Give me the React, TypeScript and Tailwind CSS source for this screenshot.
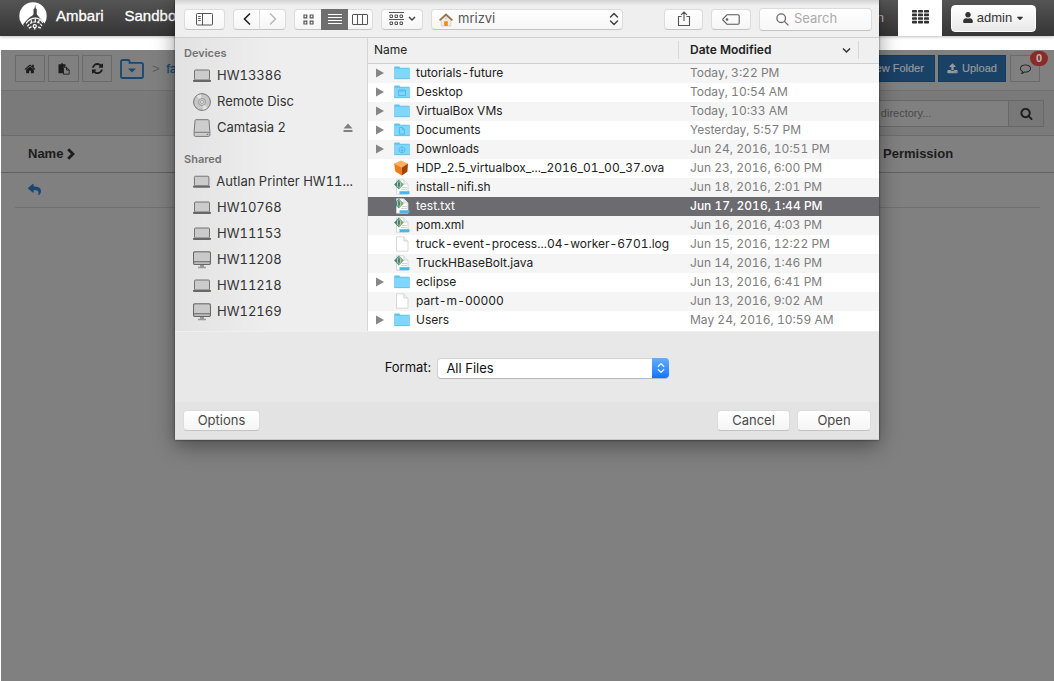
import React from "react";
import { FaCaretDown, FaReply, FaUser } from "react-icons/fa";

const HOME =
  "M1472 992v480q0 26-19 45t-45 19h-384v-384h-256v384h-384q-26 0-45-19t-19-45v-480q0-1 .5-3t.5-3l575-474 575 474q1 2 1 6zm223-69l-62 74q-8 9-21 11h-3q-13 0-21-7l-692-577-692 577q-12 8-24 7-13-2-21-11l-62-74q-8-10-7-23.5t11-21.5l719-599q32-26 76-26t76 26l244 204v-195q0-14 9-23t23-9h192q14 0 23 9t9 23v408l219 182q10 8 11 21.5t-7 23.5z";
const REFRESH =
  "M1511 928q0 5-1 7-64 268-268 434.5t-478 166.5q-146 0-282.5-55t-243.5-157l-129 129q-19 19-45 19t-45-19-19-45v-448q0-26 19-45t45-19h448q26 0 45 19t19 45-19 45l-137 137q71 66 161 102t187 36q134 0 250-65t186-179q11-17 53-117 8-23 30-23h192q13 0 22.5 9.5t9.5 22.5zm25-800v448q0 26-19 45t-45 19h-448q-26 0-45-19t-19-45 19-45l138-138q-148-137-349-137-134 0-250 65t-186 179q-11 17-53 117-8 23-30 23h-199q-13 0-22.5-9.5t-9.5-22.5v-7q65-268 270-434.5t480-166.5q146 0 284 55.5t245 156.5l130-129q19-19 45-19t45 19 19 45z";
const COMMENT =
  "M896 384q-204 0-381.5 69.5t-282 187.5-104.5 255q0 112 71.5 213.5t201.5 175.5l87 50-27 96q-24 91-70 172 152-63 275-171l43-38 57 6q69 8 130 8 204 0 381.5-69.5t282-187.5 104.5-255-104.5-255-282-187.5-381.5-69.5zm896 512q0 174-120 321.5t-326 233-450 85.5q-70 0-145-8-198 175-460 242-49 14-114 22h-5q-15 0-27-10.5t-16-27.5v-1q-3-4-.5-12t2-10 4.5-9.5l6-9 7-8.5 8-9q7-8 31-34.5t34.5-38 31-39.5 32.5-51 27-59 26-76q-157-89-247.5-220t-90.5-281q0-174 120-321.5t326-233 450-85.5 450 85.5 326 233 120 321.5z";
const SEARCH =
  "M1216 832q0-185-131.5-316.5t-316.5-131.5-316.5 131.5-131.5 316.5 131.5 316.5 316.5 131.5 316.5-131.5 131.5-316.5zm512 832q0 52-38 90t-90 38q-54 0-90-38l-343-342q-179 124-399 124-143 0-273.5-55.5t-225-150-150-225-55.5-273.5 55.5-273.5 150-225 225-150 273.5-55.5 273.5 55.5 225 150 150 225 55.5 273.5q0 220-124 399l343 343q37 37 37 90z";
const UPLOAD =
  "M1344 1472q0-26-19-45t-45-19-45 19-19 45 19 45 45 19 45-19 19-45zm256 0q0-26-19-45t-45-19-45 19-19 45 19 45 45 19 45-19 19-45zm128-224v320q0 40-28 68t-68 28h-1472q-40 0-68-28t-28-68v-320q0-40 28-68t68-28h427q21 56 70.5 92t110.5 36h256q61 0 110.5-36t70.5-92h427q40 0 68 28t28 68zm-325-648q-17 40-59 40h-256v448q0 26-19 45t-45 19h-256q-26 0-45-19t-19-45v-448h-256q-42 0-59-40-17-39 14-69l448-448q18-19 45-19t45 19l448 448q31 30 14 69z";

function Glyph({ d, className }: { d: string; className: string }) {
  return (
    <svg viewBox="0 0 1792 1792" fill="currentColor" className={className} aria-hidden="true">
      <path d={d} />
    </svg>
  );
}

function AmbariLogo() {
  return (
    <svg viewBox="0 0 27 27" className="h-7 w-7" aria-hidden="true">
      <circle cx="13.5" cy="13.5" r="13.2" fill="#fff" />
      <path d="M15.600 2.500l.5 3.500 1 1v4.800l1 1.200c2 2.400 4.800 5.500 7.400 8.800L22 27H5.500L4 21.500c2.500-3.500 6-6.800 9-8.500l1-1.200V7l1-1z" fill="#444" />
      <path d="M6.800 20.500c2.600-3.500 5.800-5 9-5 3.200 0 5.600 1.600 7.200 4.500" fill="none" stroke="#fff" strokeWidth="1.200" />
      <path d="M8.200 23.500c1.800-3 4.400-4.300 7.400-4.300 2.800 0 4.900 1.200 6.400 3.800" fill="none" stroke="#fff" strokeWidth="1.200" strokeDasharray="2.600 1" />
      <path d="M11.500 17.500l1 2.300M15.700 16v3M19.700 17.400l-1.200 2.300" stroke="#fff" strokeWidth="1.200" />
      <circle cx="15.200" cy="23.200" r="1.500" fill="none" stroke="#fff" strokeWidth="1.200" />
      <path d="M9.500 25.300l2.500-1.500M18.500 24l2.500 1.200M15.200 25v1.500" stroke="#fff" strokeWidth="1.300" />
    </svg>
  );
}

function Laptop() {
  return (
    <svg viewBox="0 0 18 18" className="h-[18px] w-[18px]" aria-hidden="true">
      <rect x="1.500" y="3" width="15" height="10" rx="1" fill="#cbcbcb" stroke="#737373" />
      <path d="M0 13h18v1q0 .9-1 .9H1q-1 0-1-.9z" fill="#686868" />
    </svg>
  );
}

function Desktop() {
  return (
    <svg viewBox="0 0 18 18" className="h-[18px] w-[18px]" aria-hidden="true">
      <rect x=".6" y=".9" width="16.800" height="12.400" rx="1" fill="#d9d9d9" stroke="#686868" strokeWidth="1.200" />
      <rect x="1.500" y="1.800" width="15" height="8.600" fill="#c9c9c9" />
      <path d="M1 10.800h16" stroke="#686868" strokeWidth="1.200" />
      <path d="M7 14h4v1.800h2v1.400H5v-1.400h2z" fill="#999" />
    </svg>
  );
}

function Disc() {
  return (
    <svg viewBox="0 0 18 18" className="h-[18px] w-[18px]" aria-hidden="true">
      <circle cx="9" cy="9" r="8.400" fill="#c6c6c6" stroke="#747474" />
      <path d="M9 9L3.500 3.200A8 8 0 0 1 8 1.200zM9 9l5.500 5.800A8 8 0 0 1 10 16.800z" fill="#e2e2e2" />
      <circle cx="9" cy="9" r="3.500" fill="#d2d2d2" stroke="#8a8a8a" strokeWidth=".8" />
      <circle cx="9" cy="9" r="1.500" fill="#eee" stroke="#8a8a8a" strokeWidth=".7" />
    </svg>
  );
}

function Drive() {
  return (
    <svg viewBox="0 0 18 18" className="h-[18px] w-[18px]" aria-hidden="true">
      <path d="M3 .7h12q.9 0 1 1l.9 11V16q0 1.400-1.400 1.400h-13Q1.100 17.400 1.100 16v-3.300l.9-11q.1-1 1-1z" fill="#cdcdcd" stroke="#787878" />
      <path d="M1.300 13.300h15.400" stroke="#787878" />
      <path d="M13.800 15.300h1.500" stroke="#666" />
    </svg>
  );
}

type FileKind = "folder" | "desktop" | "documents" | "downloads" | "box" | "code" | "blank";

function FileIcon({ kind }: { kind: FileKind }) {
  if (kind === "box") {
    return (
      <svg viewBox="0 0 16 16" className="h-4 w-4" aria-hidden="true">
        <path d="M7 .4l7 3.100-6.200 3.900L.2 3.600z" fill="#f9b25c" />
        <path d="M.2 3.600l7.600 3.800v8.200L1.300 11.600z" fill="#f07c19" />
        <path d="M14 3.500l-.6 8.200-5.600 3.900V7.400z" fill="#a5420c" />
      </svg>
    );
  }
  if (kind === "blank" || kind === "code") {
    return (
      <svg viewBox="0 0 16 16" className="h-4 w-4" aria-hidden="true">
        <path d="M2.500.8h7.300l4.200 4.200v10.200H2.500z" fill="#fff" stroke="#cfcfcf" strokeWidth=".8" />
        <path d="M9.800.8V5H14" fill="#f0f0f0" stroke="#cfcfcf" strokeWidth=".8" />
        {kind === "code" && (
          <>
            <path d="M8 8.500h5M7 10.500h6" stroke="#c5c9cc" strokeWidth=".8" />
            <path d="M5.500 12.200h10v3h-10z" fill="#4ab5e8" />
            <path d="M5 .6L.1 5.500 5 10.400z" fill="#2b88b5" />
            <path d="M5 .6l4.900 4.900L5 10.400z" fill="#63aebd" />
            <path d="M3 3.400Q5 1.400 7 3.400v4.200Q5 9.600 3 7.600z" fill="#e8c33e" />
            <path d="M4.200 3.300h1.600v4.400H4.200z" fill="#277285" />
          </>
        )}
      </svg>
    );
  }
  return (
    <svg viewBox="0 0 16 16" className="h-4 w-4" aria-hidden="true">
      <path d="M.2 2.300q0-.7.700-.7h4.300l1.300 1.200h8.500q.7 0 .7.700v9.900q0 .6-.7.600H.9q-.7 0-.7-.6z" fill="#5fc4ed" />
      <path d="M.2 3.800h15.500v9.400q0 .6-.7.600H.9q-.7 0-.7-.6z" fill="#80d6fb" />
      <path d="M.5 13.700h15" stroke="#59b9df" strokeWidth=".6" />
      {kind === "desktop" && <path d="M4.500 6h7v5.500h-7zM4.500 7h7" fill="none" stroke="#4fb3dc" strokeWidth=".8" />}
      {kind === "documents" && <path d="M5.500 5.500h3l2 2v4.700h-5zM8.500 5.500v2h2" fill="none" stroke="#4fb3dc" strokeWidth=".8" />}
      {kind === "downloads" && (
        <path d="M8 6a2.900 2.900 0 1 0 .01 0M8 7.300v2.900M6.700 9L8 10.300 9.300 9" fill="none" stroke="#4fb3dc" strokeWidth=".9" />
      )}
    </svg>
  );
}

const files: { name: string; date: string; kind: FileKind; selected?: boolean }[] = [
  { name: "tutorials-future", date: "Today, 3:22 PM", kind: "folder" },
  { name: "Desktop", date: "Today, 10:54 AM", kind: "desktop" },
  { name: "VirtualBox VMs", date: "Today, 10:33 AM", kind: "folder" },
  { name: "Documents", date: "Yesterday, 5:57 PM", kind: "documents" },
  { name: "Downloads", date: "Jun 24, 2016, 10:51 PM", kind: "downloads" },
  { name: "HDP_2.5_virtualbox_..._2016_01_00_37.ova", date: "Jun 23, 2016, 6:00 PM", kind: "box" },
  { name: "install-nifi.sh", date: "Jun 18, 2016, 2:01 PM", kind: "code" },
  { name: "test.txt", date: "Jun 17, 2016, 1:44 PM", kind: "code", selected: true },
  { name: "pom.xml", date: "Jun 16, 2016, 4:03 PM", kind: "code" },
  { name: "truck-event-process...04-worker-6701.log", date: "Jun 15, 2016, 12:22 PM", kind: "blank" },
  { name: "TruckHBaseBolt.java", date: "Jun 14, 2016, 1:46 PM", kind: "code" },
  { name: "eclipse", date: "Jun 13, 2016, 6:41 PM", kind: "folder" },
  { name: "part-m-00000", date: "Jun 13, 2016, 9:02 AM", kind: "blank" },
  { name: "Users", date: "May 24, 2016, 10:59 AM", kind: "folder" },
];

const shared = [
  { name: "Autlan Printer HW11...", icon: <Laptop /> },
  { name: "HW10768", icon: <Laptop /> },
  { name: "HW11153", icon: <Laptop /> },
  { name: "HW11208", icon: <Desktop /> },
  { name: "HW11218", icon: <Laptop /> },
  { name: "HW12169", icon: <Desktop /> },
];

const macButton =
  "flex h-[21px] items-center justify-center rounded border border-[#dcdcdc] border-b-[#c4c4c4] bg-linear-to-b from-white to-[#f5f5f5] text-[#4a4a4a]";

function Place({ icon, name, children }: { icon: React.ReactNode; name: string; children?: React.ReactNode }) {
  return (
    <li>
      <a href="#" className="flex h-[26px] items-center gap-1.5 pr-3.5 pl-[18px] text-[13px] text-[#333]">
        {icon}
        <span className="flex-1 whitespace-nowrap">{name}</span>
        {children}
      </a>
    </li>
  );
}

function UpDown({ className }: { className: string }) {
  return (
    <svg viewBox="0 0 10 14" className={className} fill="none" stroke="currentColor" strokeWidth="1.500" strokeLinecap="round" strokeLinejoin="round" aria-hidden="true">
      <path d="M1.500 5L5 1.500 8.500 5M1.500 9L5 12.500 8.500 9" />
    </svg>
  );
}

function DialogToolbar() {
  return (
    <div className="flex h-[38px] items-center border-b border-[#cfcfcf] bg-linear-to-b from-[#d2d2d2] via-[#efefef] via-15% to-[#efefef] pt-px pr-[7px] pl-[9px]">
      <button type="button" aria-label="Toggle sidebar" className={`${macButton} w-[41px]`}>
        <svg viewBox="0 0 17 13" className="h-[13px] w-[17px]" fill="none" stroke="#555" aria-hidden="true">
          <rect x=".5" y=".5" width="16" height="11.500" rx="1" />
          <path d="M6.500 .5v11.500M2.200 3.500h2.500M2.200 5.500h2.500M2.200 7.500h2.500" />
        </svg>
      </button>
      <div className="ml-2 flex">
        <button type="button" aria-label="Back" className={`${macButton} w-[27px] rounded-r-none`}>
          <svg viewBox="0 0 8 14" className="h-3.5 w-2" fill="none" stroke="#222" strokeWidth="1.600" aria-hidden="true"><path d="M7 1.500L1.500 7 7 12.500" /></svg>
        </button>
        <button type="button" aria-label="Forward" className={`${macButton} w-[26px] rounded-l-none border-l-0`}>
          <svg viewBox="0 0 8 14" className="h-3.5 w-2" fill="none" stroke="#b5b5b5" strokeWidth="1.400" aria-hidden="true"><path d="M1 1.500L6.500 7 1 12.500" /></svg>
        </button>
      </div>
      <div className="ml-2 flex">
        <button type="button" aria-label="Icon view" className={`${macButton} w-[27px] rounded-r-none border-r-0`}>
          <svg viewBox="0 0 11 11" className="h-[11px] w-[11px]" fill="none" stroke="#555" strokeWidth="1.200" aria-hidden="true">
            <path d="M1 1h2.800v2.800H1zM7.200 1H10v2.800H7.200zM1 7.200h2.800V10H1zM7.200 7.200H10V10H7.200z" />
          </svg>
        </button>
        <button type="button" aria-label="List view" className="flex h-[21px] w-[27px] items-center justify-center bg-[#6f6f6f]">
          <svg viewBox="0 0 14 12" className="h-3 w-3.5" stroke="#fff" aria-hidden="true"><path d="M0 1.500h14M0 4.500h14M0 7.500h14M0 10.500h14" /></svg>
        </button>
        <button type="button" aria-label="Column view" className={`${macButton} w-[25px] rounded-l-none border-l-0`}>
          <svg viewBox="0 0 16 11" className="h-[11px] w-4" fill="none" stroke="#555" aria-hidden="true">
            <rect x=".5" y=".5" width="15" height="10" rx=".5" />
            <path d="M5.500 .5v10M10.500 .5v10" />
          </svg>
        </button>
      </div>
      <button type="button" aria-label="Arrange" className={`${macButton} ml-2 w-[42px] gap-1`}>
        <svg viewBox="0 0 15 14" className="h-3.5 w-[15px]" fill="none" stroke="#555" aria-hidden="true">
          <path d="M0 .5h15M0 7.500h15M1 3h2.500v2.500H1zM6 3h2.500v2.500H6zM11 3h2.500v2.500H11zM1 10h2.500v2.500H1zM6 10h2.500v2.500H6zM11 10h2.500v2.500H11z" />
        </svg>
        <svg viewBox="0 0 8 6" className="h-1.5 w-2" fill="none" stroke="#444" strokeWidth="1.500" aria-hidden="true"><path d="M1 1l3 3 3-3" /></svg>
      </button>
      <div className="relative ml-2 h-[21px] w-[192px]">
        <select aria-label="Location" defaultValue="mrizvi" className="block h-[21px] w-full appearance-none rounded border border-[#dcdcdc] border-b-[#c4c4c4] bg-linear-to-b from-white to-[#f5f5f5] pb-0.5 pl-[26px] text-[13px] leading-4 text-[#555]">
          <option>mrizvi</option>
        </select>
        <svg viewBox="0 0 14 14" className="pointer-events-none absolute top-1 left-2 h-3.5 w-3.5" aria-hidden="true">
          <path d="M2.200 6.500L7 2.500l4.800 4V13H2.200z" fill="#efece5" stroke="#c7c2b7" strokeWidth=".6" />
          <path d="M.6 7.300L7 1.500l6.400 5.800" fill="none" stroke="#987348" strokeWidth="1.800" />
          <path d="M5.200 8.200h3.600V13H5.200z" fill="#ee8d12" />
          <circle cx="7" cy="5.600" r="1" fill="#c2cbd0" />
        </svg>
        <UpDown className="pointer-events-none absolute top-[3px] right-1 h-3.5 w-2.5 text-[#444]" />
      </div>
      <button type="button" aria-label="Share" className={`${macButton} ml-auto w-[39px]`}>
        <svg viewBox="0 0 14 16" className="h-4 w-3.5" fill="none" stroke="#555" strokeWidth="1.100" aria-hidden="true">
          <path d="M4.500 5.500H1.500v9h11v-9h-3M7 10V1M4 3.800L7 1l3 2.800" />
        </svg>
      </button>
      <button type="button" aria-label="Edit tags" className={`${macButton} ml-2 w-10`}>
        <svg viewBox="0 0 18 11" className="h-[11px] w-[18px]" fill="none" stroke="#555" strokeWidth="1.100" aria-hidden="true">
          <path d="M5.500.7H16q1.200 0 1.200 1.200v7.200q0 1.200-1.200 1.200H5.500q-.7 0-1.100-.6L1 6.100q-.4-.6 0-1.200l3.400-3.600q.4-.6 1.100-.6z" />
          <circle cx="5" cy="5.500" r=".8" />
        </svg>
      </button>
      <div className="relative ml-2 h-[23px] w-[113px]">
        <input type="text" aria-label="Search" placeholder="Search" className="block h-[23px] w-full rounded border border-[#dcdcdc] border-b-[#c4c4c4] bg-linear-to-b from-white to-[#f7f7f7] pb-0.5 pl-[34px] text-[13px] placeholder:text-[#aaa]" />
        <svg viewBox="0 0 13 13" className="pointer-events-none absolute top-[5px] left-[17px] h-[13px] w-[13px]" fill="none" stroke="#6a6a6a" strokeWidth="1.300" aria-hidden="true">
          <circle cx="5.200" cy="5.200" r="4.300" />
          <path d="M8.400 8.400l4 4" />
        </svg>
      </div>
    </div>
  );
}

function FileTable() {
  return (
    <table className="w-full table-fixed border-collapse text-left text-xs tabular-nums">
      <colgroup>
        <col />
        <col className="w-[181px]" />
        <col className="w-5" />
      </colgroup>
      <thead>
        <tr className="h-[25px] border-b border-[#cfcfcf] bg-[#f0f0f0] text-[#222]">
          <th scope="col" className="py-0 pl-1.5 font-normal">Name</th>
          <th scope="col" className="p-0 font-semibold">
            <div className="flex h-[18px] items-center justify-between border-x border-[#d8d8d8] pr-[7px] pl-[11px]">
              Date Modified
              <svg viewBox="0 0 9 7" className="h-[7px] w-[9px]" fill="none" stroke="#333" strokeWidth="1.500" aria-hidden="true"><path d="M1 1.500l3.500 3.500L8 1.500" /></svg>
            </div>
          </th>
          <td className="p-0" />
        </tr>
      </thead>
      <tbody>
        {files.map((f) => (
          <tr key={f.name} className={f.selected ? "h-[19px] bg-[#6c6b70] text-white" : "h-[19px] text-[#222] odd:bg-[#f5f5f5]"}>
            <td className="p-0">
              <div className="flex h-[19px] items-center pl-2">
                <span className="flex w-[18px]">
                  {["folder", "desktop", "documents", "downloads"].includes(f.kind) && (
                    <svg viewBox="0 0 8 10" className="h-2.5 w-2" aria-hidden="true"><path d="M0 .5L8 5 0 9.500z" fill="#868686" /></svg>
                  )}
                </span>
                <FileIcon kind={f.kind} />
                <span className="ml-1.5 whitespace-nowrap">{f.name}</span>
              </div>
            </td>
            <td className={f.selected ? "py-0 pl-3 font-medium whitespace-nowrap" : "py-0 pl-3 whitespace-nowrap text-[#7d7d7d]"}>{f.date}</td>
            <td className="p-0" />
          </tr>
        ))}
      </tbody>
    </table>
  );
}

function OpenDialog() {
  return (
    <div role="dialog" aria-label="Open file" className="w-[704px] bg-[#e8e8e8] font-['Inter','Liberation_Sans',sans-serif] shadow-[0_6px_20px_rgba(0,0,0,0.4),0_0_2px_rgba(0,0,0,0.6)]">
      <DialogToolbar />
      <div className="flex h-[293px]">
        <nav aria-label="Places" className="w-[193px] shrink-0 border-r border-[#d6d6d6] bg-linear-to-r from-[#e2e2e2] to-[#eeeeee] to-50% tabular-nums">
          <h2 className="flex h-[25px] items-end pb-0.5 pl-[9px] text-[11px] font-semibold text-[#737373]">Devices</h2>
          <ul>
            <Place icon={<Laptop />} name="HW13386" />
            <Place icon={<Disc />} name="Remote Disc" />
            <Place icon={<Drive />} name="Camtasia 2">
              <svg viewBox="0 0 10 10" className="h-2.5 w-2.5" fill="#808080" aria-hidden="true"><path d="M5 .5l4.500 5h-9zM.5 7h9v2h-9z" /></svg>
            </Place>
          </ul>
          <h2 className="flex h-7 items-end pb-0.5 pl-[9px] text-[11px] font-semibold text-[#737373]">Shared</h2>
          <ul>
            {shared.map((p) => (
              <Place key={p.name} icon={p.icon} name={p.name} />
            ))}
          </ul>
        </nav>
        <div className="min-w-0 flex-1 bg-white">
          <FileTable />
        </div>
      </div>
      <div className="flex h-[71px] items-center justify-center border-t border-[#efefef] pt-0.5 text-[13px] text-[#111]">
        <label htmlFor="format" className="mr-1.5">Format:</label>
        <div className="relative h-[21px] w-[232px]">
          <select id="format" defaultValue="All Files" className="block h-[21px] w-full appearance-none rounded border border-[#d0d0d0] border-b-[#b8b8b8] bg-white pl-2 text-[13px] leading-4">
            <option>All Files</option>
          </select>
          <span className="pointer-events-none absolute top-0 right-0 flex h-5 w-[17px] items-center justify-center rounded-r bg-linear-to-b from-[#63adfc] to-[#0b74fd]">
            <UpDown className="h-3 w-2 text-white" />
          </span>
        </div>
      </div>
      <div className="flex h-[38px] items-center gap-[7px] border-b border-[#c9c9c9] bg-[#e3e3e3] px-2 text-[13px]">
        <button type="button" className={`${macButton} mr-auto w-[77px]`}>Options</button>
        <button type="button" className={`${macButton} w-[73px]`}>Cancel</button>
        <button type="button" className={`${macButton} w-[74px]`}>Open</button>
      </div>
    </div>
  );
}

function TopBar() {
  return (
    <header className="flex h-9 items-stretch bg-linear-to-b from-[#555] to-[#353535] text-white shadow-[0_1px_3px_rgba(0,0,0,0.25)]">
      <a href="#" className="ml-[19px] flex items-center gap-[9px] pb-1 text-[15px] [-webkit-text-stroke:0.3px_white]">
        <AmbariLogo />
        Ambari
      </a>
      <a href="#" className="ml-[21px] flex items-center pb-1 text-[15px] [-webkit-text-stroke:0.3px_white]">Sandbox</a>
      <a href="#" className="ml-auto flex items-center px-3.5 text-[13px] text-[#bbb]">Admin</a>
      <button type="button" aria-label="Views" className="flex w-11 items-center justify-center bg-white pb-0.5">
        <svg viewBox="0 0 17 14" className="h-3.5 w-[17px]" fill="#333" aria-hidden="true">
          {[0, 6, 12].map((x) => [0, 3.600, 7.200, 10.800].map((y) => <rect key={`${x}-${y}`} x={x} y={y} width="5" height="2.600" rx=".6" />))}
        </svg>
      </button>
      <button type="button" className="mt-[5px] mr-[18px] ml-[9px] flex h-[27px] w-[85px] items-center justify-center gap-1 rounded border border-white bg-linear-to-b from-white to-[#e8e8e8] pb-0.5 text-[13px] text-[#333]">
        <FaUser className="h-[11px] w-2.5" />
        admin
        <FaCaretDown className="h-2.5 w-2" />
      </button>
    </header>
  );
}

const pageButton = "flex h-[27px] items-center justify-center border border-[#6a6a6a] text-[#1c1c1c]";
const blueButton = "flex h-[27px] items-center justify-center gap-1 border border-[#173b5b] bg-[#1a4166] text-[11px] text-[#999] [-webkit-text-stroke:0.2px_#999]";

export default function App() {
  return (
    <div className="relative flex min-h-screen flex-col bg-white font-['Liberation_Sans',Arial,sans-serif]">
      <TopBar />
      <main className="mt-3.5 ml-px flex-1 bg-[#808080] text-[#1c1c1c]">
        <div className="flex h-[41px] items-center border-b border-[#707070] px-3.5 pt-[5px] pb-2">
          <div className="flex items-center gap-[3px]">
            <button type="button" aria-label="Home" className={`${pageButton} w-[30px]`}><Glyph d={HOME} className="h-3 w-3" /></button>
            <button type="button" aria-label="Paste" className={`${pageButton} w-[31px]`}>
              <svg viewBox="0 0 12 12" className="h-3 w-3" aria-hidden="true">
                <path d="M.5 1.200h2.300Q3 .3 4 .3t1.200.9h2.300v2.600H5v6.400H.5z" fill="#1c1c1c" />
                <path d="M5.500 4.300h3l2.700 2.700v4.200H5.500zM8.500 4.300V7h2.700" fill="none" stroke="#1c1c1c" strokeWidth=".9" />
              </svg>
            </button>
            <button type="button" aria-label="Refresh" className={`${pageButton} w-[30px]`}>
              <svg viewBox="0 0 1536 1664" className="h-3 w-[11px]" fill="currentColor" aria-hidden="true"><path d={REFRESH} /></svg>
            </button>
          </div>
          <button type="button" aria-label="Choose folder" className="ml-2">
            <svg viewBox="0 0 24 20" className="h-5 w-6" aria-hidden="true">
              <path d="M1 2.800Q1 1 2.800 1h5.400Q9.500 1 9.500 2.300v1.500h11.700Q23 3.800 23 5.600v11.600Q23 19 21.200 19H2.800Q1 19 1 17.200z" fill="none" stroke="#1a4670" strokeWidth="1.800" />
              <path d="M8 9.500h8L12 13.600z" fill="#1a4670" />
            </svg>
          </button>
          <span className="ml-2 text-[13px] text-[#5c5c5c]">&gt;</span>
          <a href="#" className="ml-[7px] text-xs text-[#1a4670] [-webkit-text-stroke:0.3px_#1a4670]">falcon</a>
          <div className="ml-auto flex items-center gap-[3px]">
            <button type="button" className={`${blueButton} w-[88px]`}>+ New Folder</button>
            <button type="button" className={`${blueButton} w-[68px]`}><Glyph d={UPLOAD} className="h-[11px] w-[11px]" />Upload</button>
            <button type="button" aria-label="Messages" className={`${pageButton} relative ml-px w-[30px]`}>
              <Glyph d={COMMENT} className="h-[11px] w-[11px]" />
              <span className="absolute -top-[5px] -right-[9px] flex h-[15px] w-[18px] items-center justify-center rounded-full bg-[#8b2b28] text-[11px] font-bold text-[#bbb]">0</span>
            </button>
          </div>
        </div>
        <div className="flex h-[45px] items-center justify-end border-b border-[#6c6c6c] bg-[#7a7a7a] pr-2.5">
          <input type="text" aria-label="Search in current directory" placeholder="Search in current directory..." className="h-[27px] w-[220px] border border-[#686868] bg-[#808080] pl-1 text-[11px] placeholder:text-[#4a4a4a]" />
          <button type="button" aria-label="Search" className="flex h-[27px] w-[35px] items-center justify-center border border-l-0 border-[#686868] bg-[#787878]"><Glyph d={SEARCH} className="h-[13px] w-[13px]" /></button>
        </div>
        <table className="w-full table-fixed border-collapse text-left text-[13px]">
          <thead>
            <tr className="h-9 border-b border-[#606060]">
              <th scope="col" className="py-0 pl-[27px] font-bold">
                <span className="flex items-center gap-1">
                  Name
                  <svg viewBox="0 0 8 12" className="h-3 w-2" fill="none" stroke="#1c1c1c" strokeWidth="2.800" aria-hidden="true"><path d="M1.200 1.200L6 6l-4.800 4.800" /></svg>
                </span>
              </th>
              <th scope="col" className="w-[171px] p-0 font-bold">Permission</th>
            </tr>
          </thead>
        </table>
        <div className="mx-3.5 flex h-[35px] items-center border-b border-[#707070] pl-[13px]">
          <button type="button" aria-label="Up one level" className="text-[#1a4670]"><FaReply className="h-[13px] w-[13px]" /></button>
        </div>
      </main>
      <div className="absolute inset-x-0 top-0 flex justify-center">
        <OpenDialog />
      </div>
    </div>
  );
}
